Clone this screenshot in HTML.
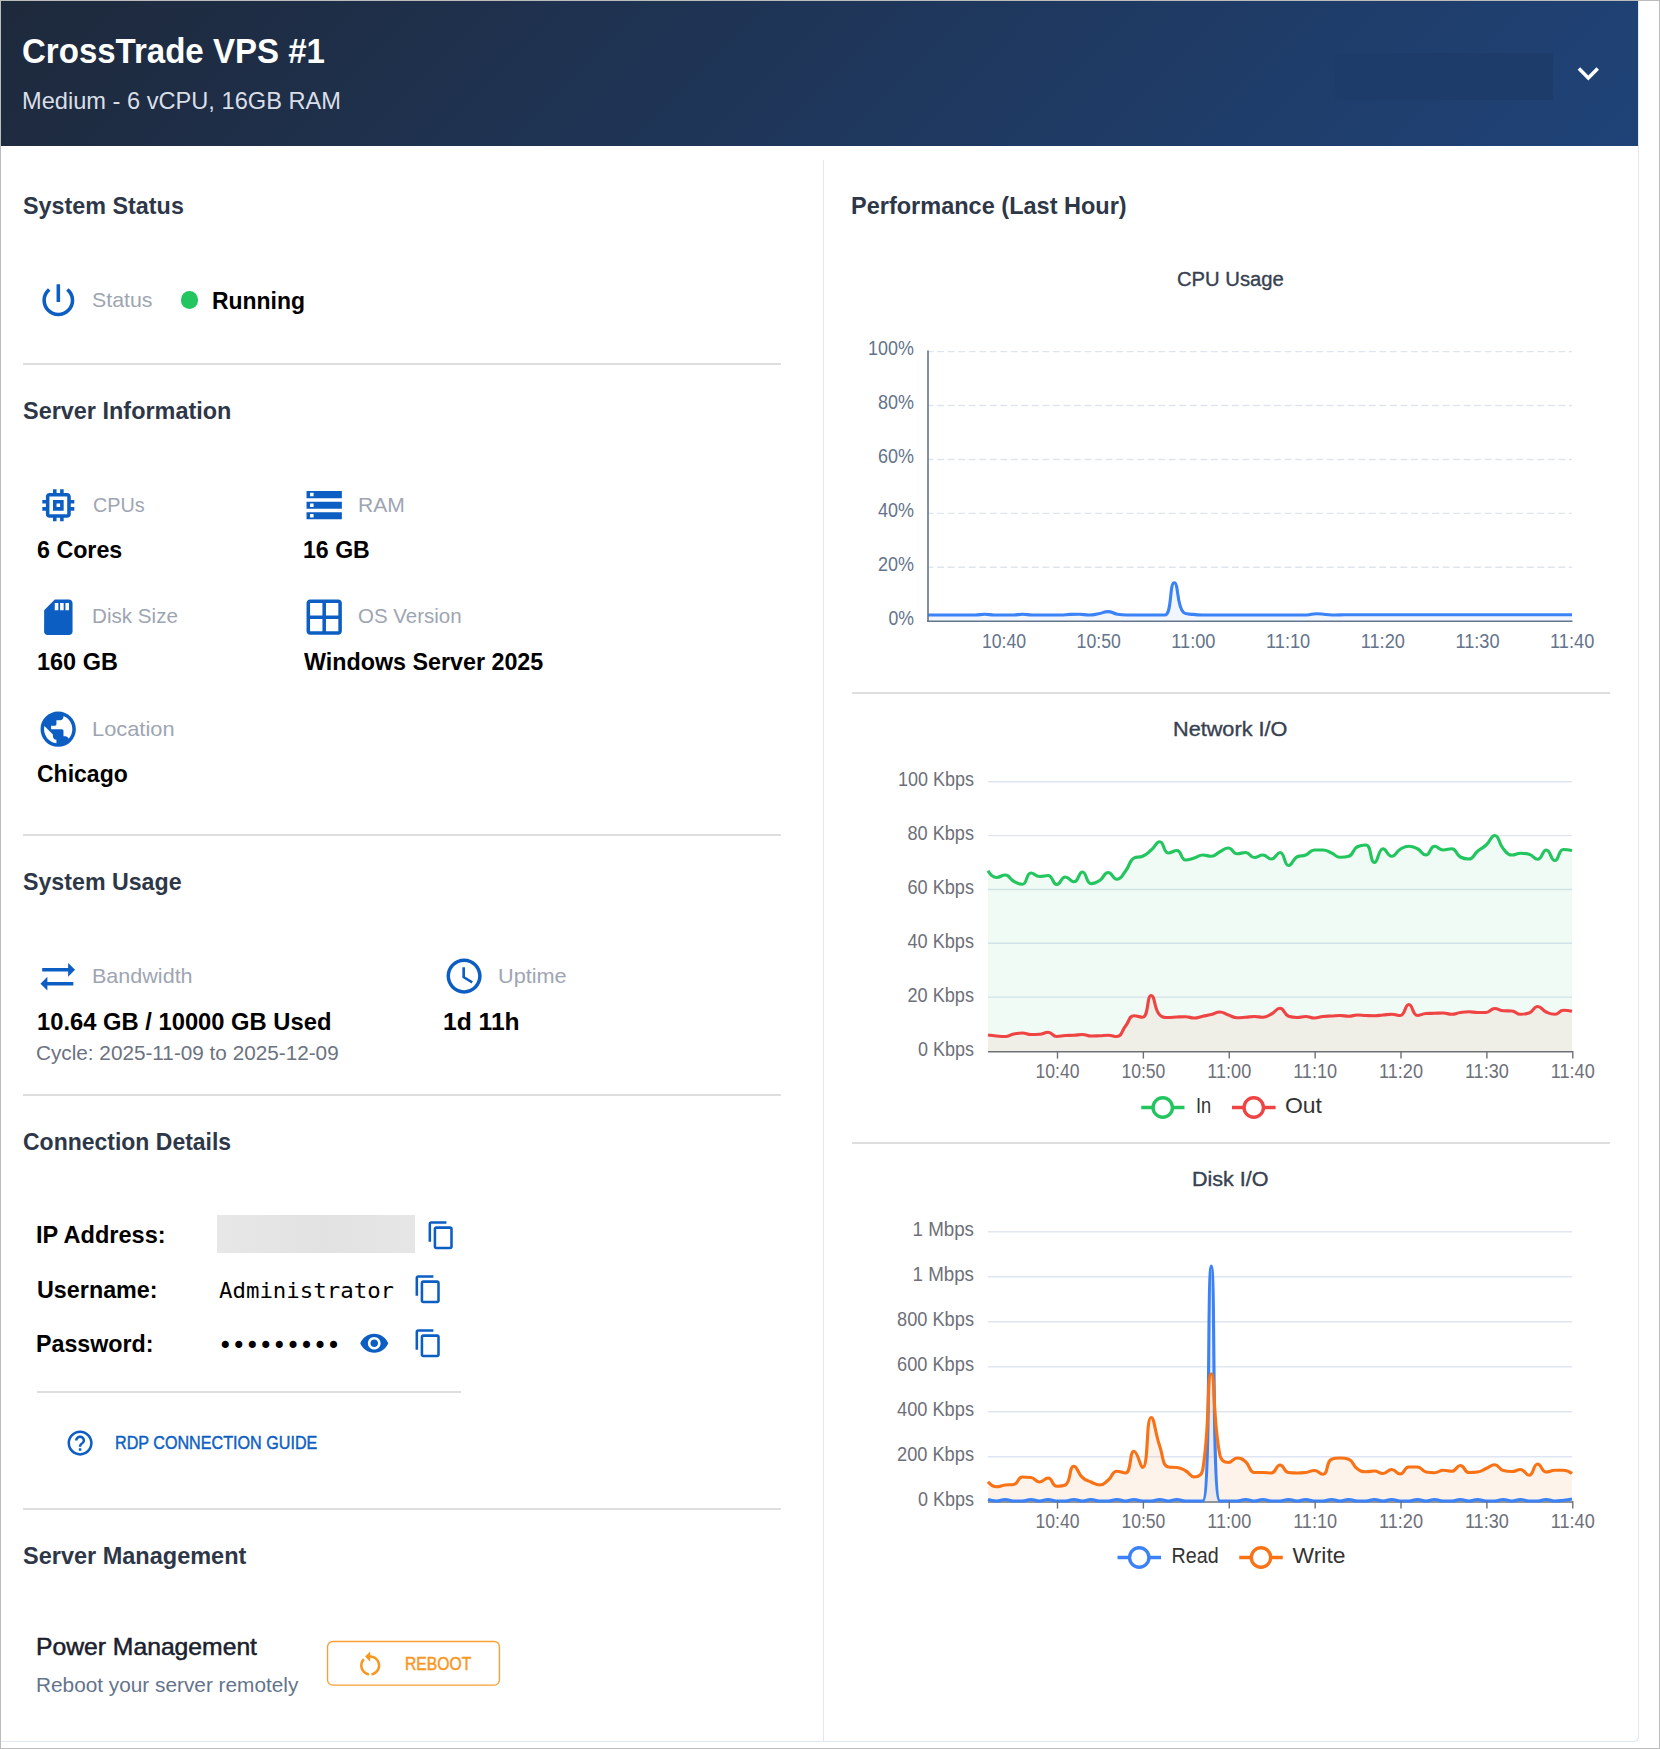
<!DOCTYPE html>
<html lang="en"><head><meta charset="utf-8"><title>CrossTrade VPS #1</title>
<style>
html,body{margin:0;padding:0;background:#fff}
body{width:1660px;height:1749px;position:relative;overflow:hidden;font-family:"Liberation Sans",sans-serif;color:#000}
.frame{position:absolute;left:0;top:0;width:1660px;height:1749px;box-sizing:border-box;border:1px solid #bcbcbc;pointer-events:none}
.card{position:absolute;left:1px;top:1px;width:1638px;height:1741px;box-sizing:border-box;border:1px solid #e2e8f0;border-top:0;border-left:0;border-radius:0 0 5.5px 0;background:#fff}
.inner{position:absolute;left:-1px;top:-1px;width:1660px;height:1749px}
.hdr{position:absolute;left:1px;top:1px;width:1637px;height:144.8px;background:linear-gradient(135deg,#1e293b 0%,#1f4378 100%)}
.redact{position:absolute;left:1335px;top:53px;width:218px;height:46.5px;background:#1e3c6a}
.t{position:absolute;white-space:nowrap;line-height:1;transform-origin:0 50%;display:block;margin:0;padding:0;font-weight:400}
.pb{display:inline-block;width:0;height:0;vertical-align:baseline}
.h1{font-weight:700;color:#fff}
.h2{color:#d9dee7}
.sec{font-weight:700;color:#2e3748}
.lbl{color:#9ea5b2}
.val{font-weight:700;color:#000}
.cyc{color:#6b7280}
.mono{font-family:"DejaVu Sans Mono","Liberation Mono",monospace;color:#000}
.dots{letter-spacing:-1.02px}
.link{color:#0f5fc3;-webkit-text-stroke:0.45px #0f5fc3}
.pm{color:#1a202c;-webkit-text-stroke:0.5px #1a202c}
.pd{color:#64748b}
.btn{color:#f9961e;-webkit-text-stroke:0.45px #f9961e}
.ct{color:#374151;-webkit-text-stroke:0.35px #374151}
.ic{position:absolute;display:block}
.chart{position:absolute;display:block;font-family:"Liberation Sans",sans-serif}
.hr{position:absolute;height:2px;background:#dedede}
.vr{position:absolute;left:823px;top:160px;width:1px;height:1581px;background:#e3e6ed}
.dot{position:absolute;left:181px;top:291.4px;width:17.2px;height:17.2px;border-radius:50%;background:#22c55e}
.ipbox{position:absolute;left:217px;top:1215px;width:198px;height:37.8px;background:linear-gradient(90deg,#e7e7e7,#e2e2e2 55%,#e6e6e6)}
.reboot{position:absolute;left:325px;top:1639px;display:block}
</style></head><body>
<div class="card"><div class="inner">
<header class="card-header"><div class="hdr"></div><div class="redact"></div>
<h1 class="t h1" id="h1" style="left:22.25px;top:34.10px;font-size:34.30px;transform:scaleX(0.9630)">CrossTrade VPS #1</h1>
<p class="t h2" id="h2" style="left:21.70px;top:89.91px;font-size:23.20px;transform:scaleX(1.0186)">Medium - 6 vCPU, 16GB RAM</p>
<svg class="ic" style="left:1567.41px;top:51.66px" width="42.67" height="42.67" viewBox="0 0 24 24"><path fill="#ffffff" d="M16.59 8.59 12 13.17 7.41 8.59 6 10l6 6 6-6z"/></svg>
</header>
<main class="card-body">
<div class="vr"></div>
<div class="col-left">
<section class="system-status"><h2 class="t sec" id="s1" style="left:22.60px;top:194.76px;font-size:23.40px;transform:scaleX(0.9979)">System Status</h2><svg class="ic" style="left:36.66px;top:278.77px" width="42.67" height="42.67" viewBox="0 0 24 24"><path fill="#0d5ec3" d="M13 3h-2v10h2zm4.83 2.17-1.42 1.42C17.99 7.86 19 9.81 19 12c0 3.87-3.13 7-7 7s-7-3.13-7-7c0-2.19 1.01-4.14 2.58-5.42L6.17 5.17C4.23 6.82 3 9.26 3 12c0 4.97 4.03 9 9 9s9-4.03 9-9c0-2.74-1.23-5.18-3.17-6.83"/></svg><span class="t lbl" id="l1" style="left:92.36px;top:290.00px;font-size:20.20px;transform:scaleX(1.0573)">Status</span><div class="dot"></div><span class="t val" id="v1" style="left:211.98px;top:289.76px;font-size:23.40px;transform:scaleX(0.9808)">Running</span><div class="hr" style="left:23.00px;top:363px;width:758.00px"></div></section>
<section class="server-info"><h2 class="t sec" id="s2" style="left:22.59px;top:399.76px;font-size:23.40px;transform:scaleX(1.0022)">Server Information</h2>
<div class="item"><svg class="ic" style="left:36.66px;top:483.56px" width="42.67" height="42.67" viewBox="0 0 24 24"><path fill="#0d5ec3" d="M15 9H9v6h6zm-2 4h-2v-2h2zm8-2V9h-2V7c0-1.1-.9-2-2-2h-2V3h-2v2h-2V3H9v2H7c-1.1 0-2 .9-2 2v2H3v2h2v2H3v2h2v2c0 1.1.9 2 2 2h2v2h2v-2h2v2h2v-2h2c1.1 0 2-.9 2-2v-2h2v-2h-2v-2zm-4 6H7V7h10z"/></svg><span class="t lbl" id="l2" style="left:92.73px;top:494.50px;font-size:20.20px;transform:scaleX(0.9807)">CPUs</span>
<span class="t val" id="v2" style="left:37.08px;top:539.01px;font-size:23.20px;transform:scaleX(1.0025)">6 Cores</span></div>
<div class="item"><svg class="ic" style="left:303.05px;top:483.80px" width="42.40" height="42.40" viewBox="0 0 24 24"><path fill="#0d5ec3" d="M2 20h20v-4H2zm2-3h2v2H4zM2 4v4h20V4zm4 3H4V5h2zm-4 7h20v-4H2zm2-3h2v2H4z"/></svg><span class="t lbl" id="l3" style="left:357.72px;top:494.50px;font-size:20.20px;transform:scaleX(1.0438)">RAM</span>
<span class="t val" id="v3" style="left:302.72px;top:539.01px;font-size:23.20px;transform:scaleX(0.9971)">16 GB</span></div>
<div class="item"><svg class="ic" style="left:36.77px;top:595.56px" width="42.67" height="42.67" viewBox="0 0 24 24"><path fill="#0d5ec3" d="M18 2h-8L4.02 8 4 20c0 1.1.9 2 2 2h12c1.1 0 2-.9 2-2V4c0-1.1-.9-2-2-2m-6 6h-2V4h2zm3 0h-2V4h2zm3 0h-2V4h2z"/></svg><span class="t lbl" id="l4" style="left:92.33px;top:606.25px;font-size:20.20px;transform:scaleX(1.0210)">Disk Size</span>
<span class="t val" id="v4" style="left:37.01px;top:651.01px;font-size:23.20px;transform:scaleX(1.0115)">160 GB</span></div>
<div class="item"><svg class="ic" style="left:303.05px;top:595.70px" width="42.40" height="42.40" viewBox="0 0 24 24"><path fill="#0d5ec3" d="M20 2H4c-1.1 0-2 .9-2 2v16c0 1.1.9 2 2 2h16c1.1 0 2-.9 2-2V4c0-1.1-.9-2-2-2m0 9h-7V4h7zm-9-7v7H4V4zm-7 9h7v7H4zm9 7v-7h7v7z"/></svg><span class="t lbl" id="l5" style="left:358.29px;top:606.25px;font-size:20.20px;transform:scaleX(1.0145)">OS Version</span>
<span class="t val" id="v5" style="left:303.84px;top:651.01px;font-size:23.20px;transform:scaleX(1.0044)">Windows Server 2025</span></div>
<div class="item"><svg class="ic" style="left:36.90px;top:707.55px" width="42.40" height="42.40" viewBox="0 0 24 24"><path fill="#0d5ec3" d="M12 2C6.48 2 2 6.48 2 12s4.48 10 10 10 10-4.48 10-10S17.52 2 12 2m-1 17.93c-3.95-.49-7-3.85-7-7.93 0-.62.08-1.21.21-1.79L9 15v1c0 1.1.9 2 2 2zm6.9-2.54c-.26-.81-1-1.39-1.9-1.39h-1v-3c0-.55-.45-1-1-1H8v-2h2c.55 0 1-.45 1-1V7h2c1.1 0 2-.9 2-2v-.41c2.93 1.19 5 4.06 5 7.41 0 2.08-.8 3.97-2.1 5.39"/></svg><span class="t lbl" id="l6" style="left:91.95px;top:718.50px;font-size:20.20px;transform:scaleX(1.0822)">Location</span>
<span class="t val" id="v6" style="left:36.81px;top:763.26px;font-size:23.20px;transform:scaleX(0.9920)">Chicago</span></div>
<div class="hr" style="left:23.00px;top:834px;width:758.00px"></div></section>
<section class="system-usage"><h2 class="t sec" id="s3" style="left:22.80px;top:870.51px;font-size:23.40px;transform:scaleX(0.9917)">System Usage</h2>
<div class="item"><svg class="ic" style="left:37.35px;top:955.50px" width="41.50" height="41.50" viewBox="0 0 24 24"><path fill="#0d5ec3" d="m18 12 4-4-4-4v3H3v2h15zM6 12l-4 4 4 4v-3h15v-2H6z"/></svg><span class="t lbl" id="l7" style="left:91.81px;top:965.75px;font-size:20.20px;transform:scaleX(1.0671)">Bandwidth</span>
<span class="t val" id="v7" style="left:37.21px;top:1010.51px;font-size:23.20px;transform:scaleX(1.0243)">10.64 GB / 10000 GB Used</span>
<p class="t cyc" id="c1" style="left:36.45px;top:1043.00px;font-size:20.00px;transform:scaleX(1.0364)">Cycle: 2025-11-09 to 2025-12-09</p></div>
<div class="item"><svg class="ic" style="left:442.90px;top:954.50px" width="42.20" height="42.20" viewBox="0 0 24 24"><path fill="#0d5ec3" d="M11.99 2C6.47 2 2 6.48 2 12s4.47 10 9.99 10C17.52 22 22 17.52 22 12S17.52 2 11.99 2M12 20c-4.42 0-8-3.58-8-8s3.58-8 8-8 8 3.58 8 8-3.58 8-8 8m.5-13H11v6l5.25 3.15.75-1.23-4.5-2.67z"/></svg><span class="t lbl" id="l8" style="left:497.77px;top:965.75px;font-size:20.20px;transform:scaleX(1.0728)">Uptime</span>
<span class="t val" id="v8" style="left:442.79px;top:1010.51px;font-size:23.20px;transform:scaleX(1.0616)">1d 11h</span></div>
<div class="hr" style="left:23.00px;top:1094px;width:758.00px"></div></section>
<section class="connection"><h2 class="t sec" id="s4" style="left:22.96px;top:1131.01px;font-size:23.40px;transform:scaleX(0.9826)">Connection Details</h2>
<div class="row"><span class="t val" id="k1" style="left:35.52px;top:1224.26px;font-size:23.20px;transform:scaleX(1.0159)">IP Address:</span><div class="ipbox"></div><svg class="ic" style="left:426.20px;top:1219.70px" width="30.60" height="30.60" viewBox="0 0 24 24"><path fill="#0d5ec3" d="M16 1H4c-1.1 0-2 .9-2 2v14h2V3h12zm3 4H8c-1.1 0-2 .9-2 2v14c0 1.1.9 2 2 2h11c1.1 0 2-.9 2-2V7c0-1.1-.9-2-2-2m0 16H8V7h11z"/></svg></div>
<div class="row"><span class="t val" id="k2" style="left:36.78px;top:1278.51px;font-size:23.20px;transform:scaleX(1.0063)">Username:</span>
<span class="t mono" id="m1" style="left:219.14px;top:1279.51px;font-size:21.30px;transform:scaleX(1.0504)">Administrator</span><svg class="ic" style="left:412.80px;top:1274.10px" width="30.60" height="30.60" viewBox="0 0 24 24"><path fill="#0d5ec3" d="M16 1H4c-1.1 0-2 .9-2 2v14h2V3h12zm3 4H8c-1.1 0-2 .9-2 2v14c0 1.1.9 2 2 2h11c1.1 0 2-.9 2-2V7c0-1.1-.9-2-2-2m0 16H8V7h11z"/></svg></div>
<div class="row"><span class="t val" id="k3" style="left:35.93px;top:1332.76px;font-size:23.20px;transform:scaleX(1.0025)">Password:</span>
<span class="t mono dots" id="m2" style="left:217.99px;top:1334.10px;font-size:24.00px;transform:scaleX(1.0072)">•••••••••</span><svg class="ic" style="left:358.75px;top:1327.75px" width="30.50" height="30.50" viewBox="0 0 24 24"><path fill="#0d5ec3" d="M12 4.5C7 4.5 2.73 7.61 1 12c1.73 4.39 6 7.5 11 7.5s9.27-3.11 11-7.5c-1.73-4.39-6-7.5-11-7.5M12 17c-2.76 0-5-2.24-5-5s2.24-5 5-5 5 2.24 5 5-2.24 5-5 5m0-8c-1.66 0-3 1.34-3 3s1.34 3 3 3 3-1.34 3-3-1.34-3-3-3"/></svg><svg class="ic" style="left:412.80px;top:1328.20px" width="30.60" height="30.60" viewBox="0 0 24 24"><path fill="#0d5ec3" d="M16 1H4c-1.1 0-2 .9-2 2v14h2V3h12zm3 4H8c-1.1 0-2 .9-2 2v14c0 1.1.9 2 2 2h11c1.1 0 2-.9 2-2V7c0-1.1-.9-2-2-2m0 16H8V7h11z"/></svg></div>
<div class="hr" style="left:37.00px;top:1391px;width:424.00px"></div>
<div class="row"><svg class="ic" style="left:65.15px;top:1428.00px" width="30.20" height="30.20" viewBox="0 0 24 24"><path fill="#0d5ec3" d="M11 18h2v-2h-2zm1-16C6.48 2 2 6.48 2 12s4.48 10 10 10 10-4.48 10-10S17.52 2 12 2m0 18c-4.41 0-8-3.59-8-8s3.59-8 8-8 8 3.59 8 8-3.59 8-8 8m0-14c-2.21 0-4 1.79-4 4h2c0-1.1.9-2 2-2s2 .9 2 2c0 2-3 1.75-3 5h2c0-2.25 3-2.5 3-5 0-2.21-1.79-4-4-4"/></svg><span class="t link" id="r1" style="left:115.18px;top:1434.26px;font-size:18.20px;transform:scaleX(0.8872)">RDP CONNECTION GUIDE</span></div>
<div class="hr" style="left:23.00px;top:1508px;width:758.00px"></div></section>
<section class="management"><h2 class="t sec" id="s5" style="left:22.59px;top:1544.76px;font-size:23.40px;transform:scaleX(1.0047)">Server Management</h2>
<span class="t pm" id="p1" style="left:35.51px;top:1636.01px;font-size:23.60px;transform:scaleX(1.0466)">Power Management</span>
<p class="t pd" id="p2" style="left:36.48px;top:1675.00px;font-size:20.20px;transform:scaleX(1.0299)">Reboot your server remotely</p>
<div class="button"><svg class="reboot" width="178" height="49" viewBox="325 1639 178 49"><rect x="327.55" y="1641.45" width="171.9" height="43.7" rx="5.2" fill="none" stroke="#f99f33" stroke-width="1.35"/></svg><svg class="ic" style="left:354.50px;top:1649.10px" width="30.40" height="30.40" viewBox="0 0 24 24"><path fill="#f9961e" d="M12 5V2L8 6l4 4V7c3.31 0 6 2.69 6 6 0 2.97-2.17 5.43-5 5.91v2.02c3.95-.49 7-3.85 7-7.93 0-4.42-3.58-8-8-8m-6 8c0-1.65.67-3.15 1.76-4.24L6.34 7.34C4.9 8.79 4 10.79 4 13c0 4.08 3.05 7.44 7 7.93v-2.02c-2.83-.48-5-2.94-5-5.91"/></svg><span class="t btn" id="b1" style="left:405.05px;top:1655.80px;font-size:17.60px;transform:scaleX(0.8919)">REBOOT</span></div></section>
</div>
<div class="col-right"><section class="performance"><h2 class="t sec" id="s6" style="left:851.16px;top:194.76px;font-size:23.40px;transform:scaleX(1.0053)">Performance (Last Hour)</h2>
<div class="chart-box"><h3 class="t ct" id="t1" style="left:1177.14px;top:269.51px;font-size:19.60px;transform:scaleX(1.0328)">CPU Usage</h3><svg class="chart" style="left:852px;top:330px" width="758" height="340" viewBox="852 330 758 340">
<line x1="928" x2="1572" y1="351.60" y2="351.60" stroke="#dfe5ef" stroke-width="1.4" stroke-dasharray="6.9 3.63" stroke-dashoffset="1.4"/>
<line x1="928" x2="1572" y1="405.50" y2="405.50" stroke="#dfe5ef" stroke-width="1.4" stroke-dasharray="6.9 3.63" stroke-dashoffset="1.4"/>
<line x1="928" x2="1572" y1="459.50" y2="459.50" stroke="#dfe5ef" stroke-width="1.4" stroke-dasharray="6.9 3.63" stroke-dashoffset="1.4"/>
<line x1="928" x2="1572" y1="513.40" y2="513.40" stroke="#dfe5ef" stroke-width="1.4" stroke-dasharray="6.9 3.63" stroke-dashoffset="1.4"/>
<line x1="928" x2="1572" y1="567.30" y2="567.30" stroke="#dfe5ef" stroke-width="1.4" stroke-dasharray="6.9 3.63" stroke-dashoffset="1.4"/>
<path d="M928.00 615.00C928.00 615.00 932.74 615.00 937.47 615.00C942.21 615.00 942.21 615.00 946.94 615.00C951.68 615.00 951.68 615.00 956.41 615.00C961.15 615.00 961.15 615.00 965.88 615.00C970.62 615.00 970.63 615.00 975.35 615.00C980.10 615.00 980.09 614.20 984.82 614.20C989.56 614.20 989.55 615.00 994.29 615.00C999.02 615.00 999.03 615.00 1003.76 615.00C1008.50 615.00 1008.51 615.00 1013.24 615.00C1017.98 615.00 1017.97 614.30 1022.71 614.30C1027.44 614.30 1027.43 615.00 1032.18 615.00C1036.91 615.00 1036.91 615.00 1041.65 615.00C1046.38 615.00 1046.38 615.00 1051.12 615.00C1055.85 615.00 1055.86 615.00 1060.59 615.00C1065.33 615.00 1065.32 614.60 1070.06 614.40C1074.79 614.20 1074.80 614.20 1079.53 614.20C1084.27 614.20 1084.28 615.00 1089.00 615.00C1093.75 615.00 1093.78 614.64 1098.47 613.80C1103.25 612.94 1103.23 611.60 1107.94 611.60C1112.70 611.60 1112.60 613.37 1117.41 614.20C1122.07 615.00 1122.14 615.00 1126.88 615.00C1131.61 615.00 1131.62 615.00 1136.35 615.00C1141.09 615.00 1141.09 615.00 1145.82 615.00C1150.56 615.00 1150.56 615.00 1155.29 615.00C1160.03 615.00 1162.68 615.00 1164.76 615.00C1172.15 615.00 1169.33 582.80 1174.24 582.80C1178.80 582.80 1176.47 606.76 1183.71 612.60C1185.94 614.40 1188.40 613.80 1193.18 614.40C1197.87 615.00 1197.91 615.00 1202.65 615.00C1207.38 615.00 1207.38 615.00 1212.12 615.00C1216.85 615.00 1216.85 615.00 1221.59 615.00C1226.32 615.00 1226.32 615.00 1231.06 615.00C1235.79 615.00 1235.79 615.00 1240.53 615.00C1245.26 615.00 1245.26 615.00 1250.00 615.00C1254.74 615.00 1254.74 615.00 1259.47 615.00C1264.21 615.00 1264.21 615.00 1268.94 615.00C1273.68 615.00 1273.68 615.00 1278.41 615.00C1283.15 615.00 1283.15 615.00 1287.88 615.00C1292.62 615.00 1292.62 615.00 1297.35 615.00C1302.09 615.00 1302.11 615.00 1306.82 615.00C1311.58 615.00 1311.55 613.70 1316.29 613.70C1321.02 613.70 1321.02 614.17 1325.76 614.50C1330.49 614.82 1330.50 615.00 1335.24 615.00C1339.97 615.00 1339.97 614.70 1344.71 614.70C1349.44 614.70 1349.44 614.70 1354.18 614.70C1358.91 614.70 1358.91 614.70 1363.65 614.70C1368.38 614.70 1368.38 614.70 1373.12 614.70C1377.85 614.70 1377.85 614.70 1382.59 614.70C1387.32 614.70 1387.32 614.70 1392.06 614.70C1396.79 614.70 1396.79 614.70 1401.53 614.70C1406.26 614.70 1406.26 614.70 1411.00 614.70C1415.74 614.70 1415.74 614.70 1420.47 614.70C1425.21 614.70 1425.21 614.70 1429.94 614.70C1434.68 614.70 1434.68 614.70 1439.41 614.70C1444.15 614.70 1444.15 614.70 1448.88 614.70C1453.62 614.70 1453.62 614.70 1458.35 614.70C1463.09 614.70 1463.09 614.70 1467.82 614.70C1472.56 614.70 1472.56 614.70 1477.29 614.70C1482.03 614.70 1482.03 614.70 1486.76 614.70C1491.50 614.70 1491.50 614.70 1496.24 614.70C1500.97 614.70 1500.97 614.70 1505.71 614.70C1510.44 614.70 1510.44 614.70 1515.18 614.70C1519.91 614.70 1519.91 614.70 1524.65 614.70C1529.38 614.70 1529.38 614.70 1534.12 614.70C1538.85 614.70 1538.85 614.70 1543.59 614.70C1548.32 614.70 1548.32 614.70 1553.06 614.70C1557.79 614.70 1557.79 614.70 1562.53 614.70C1567.26 614.70 1572.00 614.70 1572.00 614.70L1572 621.2L928 621.2Z" fill="#3b82f6" fill-opacity="0.07"/>
<path d="M928.00 615.00C928.00 615.00 932.74 615.00 937.47 615.00C942.21 615.00 942.21 615.00 946.94 615.00C951.68 615.00 951.68 615.00 956.41 615.00C961.15 615.00 961.15 615.00 965.88 615.00C970.62 615.00 970.63 615.00 975.35 615.00C980.10 615.00 980.09 614.20 984.82 614.20C989.56 614.20 989.55 615.00 994.29 615.00C999.02 615.00 999.03 615.00 1003.76 615.00C1008.50 615.00 1008.51 615.00 1013.24 615.00C1017.98 615.00 1017.97 614.30 1022.71 614.30C1027.44 614.30 1027.43 615.00 1032.18 615.00C1036.91 615.00 1036.91 615.00 1041.65 615.00C1046.38 615.00 1046.38 615.00 1051.12 615.00C1055.85 615.00 1055.86 615.00 1060.59 615.00C1065.33 615.00 1065.32 614.60 1070.06 614.40C1074.79 614.20 1074.80 614.20 1079.53 614.20C1084.27 614.20 1084.28 615.00 1089.00 615.00C1093.75 615.00 1093.78 614.64 1098.47 613.80C1103.25 612.94 1103.23 611.60 1107.94 611.60C1112.70 611.60 1112.60 613.37 1117.41 614.20C1122.07 615.00 1122.14 615.00 1126.88 615.00C1131.61 615.00 1131.62 615.00 1136.35 615.00C1141.09 615.00 1141.09 615.00 1145.82 615.00C1150.56 615.00 1150.56 615.00 1155.29 615.00C1160.03 615.00 1162.68 615.00 1164.76 615.00C1172.15 615.00 1169.33 582.80 1174.24 582.80C1178.80 582.80 1176.47 606.76 1183.71 612.60C1185.94 614.40 1188.40 613.80 1193.18 614.40C1197.87 615.00 1197.91 615.00 1202.65 615.00C1207.38 615.00 1207.38 615.00 1212.12 615.00C1216.85 615.00 1216.85 615.00 1221.59 615.00C1226.32 615.00 1226.32 615.00 1231.06 615.00C1235.79 615.00 1235.79 615.00 1240.53 615.00C1245.26 615.00 1245.26 615.00 1250.00 615.00C1254.74 615.00 1254.74 615.00 1259.47 615.00C1264.21 615.00 1264.21 615.00 1268.94 615.00C1273.68 615.00 1273.68 615.00 1278.41 615.00C1283.15 615.00 1283.15 615.00 1287.88 615.00C1292.62 615.00 1292.62 615.00 1297.35 615.00C1302.09 615.00 1302.11 615.00 1306.82 615.00C1311.58 615.00 1311.55 613.70 1316.29 613.70C1321.02 613.70 1321.02 614.17 1325.76 614.50C1330.49 614.82 1330.50 615.00 1335.24 615.00C1339.97 615.00 1339.97 614.70 1344.71 614.70C1349.44 614.70 1349.44 614.70 1354.18 614.70C1358.91 614.70 1358.91 614.70 1363.65 614.70C1368.38 614.70 1368.38 614.70 1373.12 614.70C1377.85 614.70 1377.85 614.70 1382.59 614.70C1387.32 614.70 1387.32 614.70 1392.06 614.70C1396.79 614.70 1396.79 614.70 1401.53 614.70C1406.26 614.70 1406.26 614.70 1411.00 614.70C1415.74 614.70 1415.74 614.70 1420.47 614.70C1425.21 614.70 1425.21 614.70 1429.94 614.70C1434.68 614.70 1434.68 614.70 1439.41 614.70C1444.15 614.70 1444.15 614.70 1448.88 614.70C1453.62 614.70 1453.62 614.70 1458.35 614.70C1463.09 614.70 1463.09 614.70 1467.82 614.70C1472.56 614.70 1472.56 614.70 1477.29 614.70C1482.03 614.70 1482.03 614.70 1486.76 614.70C1491.50 614.70 1491.50 614.70 1496.24 614.70C1500.97 614.70 1500.97 614.70 1505.71 614.70C1510.44 614.70 1510.44 614.70 1515.18 614.70C1519.91 614.70 1519.91 614.70 1524.65 614.70C1529.38 614.70 1529.38 614.70 1534.12 614.70C1538.85 614.70 1538.85 614.70 1543.59 614.70C1548.32 614.70 1548.32 614.70 1553.06 614.70C1557.79 614.70 1557.79 614.70 1562.53 614.70C1567.26 614.70 1572.00 614.70 1572.00 614.70" fill="none" stroke="#3b82f6" stroke-width="3.1" stroke-linejoin="round"/>
<line x1="928" x2="928" y1="350.5" y2="622" stroke="#64748b" stroke-width="1.6"/>
<line x1="927.2" x2="1572.5" y1="621.3" y2="621.3" stroke="#64748b" stroke-width="1.6"/>
<text x="913.90" y="355.20" text-anchor="end" fill="#64748b" font-size="19.5" textLength="45.8" lengthAdjust="spacingAndGlyphs">100%</text>
<text x="913.90" y="409.10" text-anchor="end" fill="#64748b" font-size="19.5" textLength="36.0" lengthAdjust="spacingAndGlyphs">80%</text>
<text x="913.90" y="463.10" text-anchor="end" fill="#64748b" font-size="19.5" textLength="36.0" lengthAdjust="spacingAndGlyphs">60%</text>
<text x="913.90" y="517.00" text-anchor="end" fill="#64748b" font-size="19.5" textLength="36.0" lengthAdjust="spacingAndGlyphs">40%</text>
<text x="913.90" y="570.90" text-anchor="end" fill="#64748b" font-size="19.5" textLength="36.0" lengthAdjust="spacingAndGlyphs">20%</text>
<text x="913.90" y="624.80" text-anchor="end" fill="#64748b" font-size="19.5" textLength="25.5" lengthAdjust="spacingAndGlyphs">0%</text>
<text x="1004.00" y="647.50" text-anchor="middle" fill="#64748b" font-size="19.5" textLength="44.2" lengthAdjust="spacingAndGlyphs">10:40</text>
<text x="1098.70" y="647.50" text-anchor="middle" fill="#64748b" font-size="19.5" textLength="44.2" lengthAdjust="spacingAndGlyphs">10:50</text>
<text x="1193.40" y="647.50" text-anchor="middle" fill="#64748b" font-size="19.5" textLength="44.2" lengthAdjust="spacingAndGlyphs">11:00</text>
<text x="1288.10" y="647.50" text-anchor="middle" fill="#64748b" font-size="19.5" textLength="44.2" lengthAdjust="spacingAndGlyphs">11:10</text>
<text x="1382.80" y="647.50" text-anchor="middle" fill="#64748b" font-size="19.5" textLength="44.2" lengthAdjust="spacingAndGlyphs">11:20</text>
<text x="1477.50" y="647.50" text-anchor="middle" fill="#64748b" font-size="19.5" textLength="44.2" lengthAdjust="spacingAndGlyphs">11:30</text>
<text x="1572.20" y="647.50" text-anchor="middle" fill="#64748b" font-size="19.5" textLength="44.2" lengthAdjust="spacingAndGlyphs">11:40</text>
</svg></div><div class="hr" style="left:852.00px;top:692px;width:758.00px"></div>
<div class="chart-box"><h3 class="t ct" id="t2" style="left:1173.03px;top:719.51px;font-size:19.60px;transform:scaleX(1.1060)">Network I/O</h3><svg class="chart" style="left:852px;top:760px" width="758" height="360" viewBox="852 760 758 360">
<line x1="988" x2="1572" y1="781.75" y2="781.75" stroke="#e0e6f1" stroke-width="1.4"/>
<line x1="988" x2="1572" y1="835.60" y2="835.60" stroke="#e0e6f1" stroke-width="1.4"/>
<line x1="988" x2="1572" y1="889.45" y2="889.45" stroke="#e0e6f1" stroke-width="1.4"/>
<line x1="988" x2="1572" y1="943.30" y2="943.30" stroke="#e0e6f1" stroke-width="1.4"/>
<line x1="988" x2="1572" y1="997.15" y2="997.15" stroke="#e0e6f1" stroke-width="1.4"/>
<line x1="988" x2="1572.7" y1="1051.70" y2="1051.70" stroke="#6e7079" stroke-width="1.5"/>
<path d="M988.00 870.75C988.00 870.75 991.87 877.50 996.59 877.50C1000.45 877.50 1001.25 875.00 1005.18 875.00C1009.84 875.00 1009.14 878.76 1013.76 881.25C1017.73 883.38 1018.99 884.25 1022.35 884.25C1027.58 884.25 1025.75 873.00 1030.94 873.00C1034.34 873.00 1035.08 876.50 1039.53 876.50C1043.67 876.50 1044.60 875.50 1048.12 875.50C1053.18 875.50 1052.22 884.50 1056.71 884.50C1060.81 884.50 1060.68 877.00 1065.29 877.00C1069.27 877.00 1070.19 881.75 1073.88 881.75C1078.77 881.75 1078.42 872.00 1082.47 872.00C1087.01 872.00 1085.79 883.75 1091.06 883.75C1094.38 883.75 1095.88 882.97 1099.65 880.50C1104.47 877.34 1103.79 872.50 1108.24 872.50C1112.38 872.50 1112.68 879.25 1116.82 879.25C1121.27 879.25 1121.75 875.78 1125.41 871.25C1130.34 865.16 1128.48 861.15 1134.00 858.00C1137.07 856.25 1138.71 858.00 1142.59 856.25C1147.29 854.13 1147.13 853.42 1151.18 850.00C1155.72 846.17 1155.84 841.75 1159.76 841.75C1164.43 841.75 1163.09 853.00 1168.35 853.00C1171.68 853.00 1173.41 850.50 1176.94 850.50C1182.00 850.50 1180.44 860.00 1185.53 860.00C1189.03 860.00 1189.89 859.23 1194.12 858.00C1198.48 856.73 1198.31 855.00 1202.71 855.00C1206.90 855.00 1207.24 856.25 1211.29 856.25C1215.83 856.25 1215.52 853.85 1219.88 851.75C1224.10 849.72 1224.39 848.00 1228.47 848.00C1232.97 848.00 1232.39 853.75 1237.06 853.75C1240.98 853.75 1241.64 852.50 1245.65 852.50C1250.23 852.50 1249.72 857.50 1254.24 857.50C1258.30 857.50 1258.65 855.00 1262.82 855.00C1267.24 855.00 1267.39 859.00 1271.41 859.00C1275.98 859.00 1276.49 852.50 1280.00 852.50C1285.08 852.50 1283.78 865.50 1288.59 865.50C1292.37 865.50 1292.17 859.20 1297.18 856.75C1300.76 855.00 1301.74 856.58 1305.76 855.00C1310.33 853.21 1309.75 850.00 1314.35 850.00C1318.33 850.00 1318.77 850.00 1322.94 850.00C1327.36 850.00 1327.35 851.23 1331.53 853.00C1335.94 854.86 1335.60 857.25 1340.12 857.25C1344.19 857.25 1345.24 857.25 1348.71 856.25C1353.83 854.77 1352.20 849.31 1357.29 846.75C1360.78 845.00 1363.22 845.00 1365.88 845.00C1371.81 845.00 1369.78 862.50 1374.47 862.50C1378.37 862.50 1378.02 848.75 1383.06 848.75C1386.61 848.75 1387.29 856.25 1391.65 856.25C1395.88 856.25 1395.52 852.00 1400.24 849.25C1404.11 847.00 1404.49 846.25 1408.82 846.25C1413.08 846.25 1413.49 846.75 1417.41 848.75C1422.07 851.12 1422.01 855.00 1426.00 855.00C1430.60 855.00 1429.72 846.25 1434.59 846.25C1438.31 846.25 1438.72 850.00 1443.18 850.00C1447.31 850.00 1448.14 848.75 1451.76 848.75C1456.73 848.75 1455.42 854.30 1460.35 857.00C1464.01 859.00 1465.23 859.00 1468.94 859.00C1473.81 859.00 1473.05 854.90 1477.53 851.25C1481.64 847.90 1482.22 848.57 1486.12 845.00C1490.81 840.70 1490.86 835.50 1494.71 835.50C1499.45 835.50 1498.16 842.92 1503.29 848.75C1506.75 852.67 1507.18 855.00 1511.88 855.00C1515.77 855.00 1516.15 853.25 1520.47 853.25C1524.74 853.25 1525.06 853.25 1529.06 854.25C1533.65 855.40 1533.86 859.25 1537.65 859.25C1542.45 859.25 1542.10 850.00 1546.24 850.00C1550.68 850.00 1550.59 860.50 1554.82 860.50C1559.18 860.50 1558.11 849.50 1563.41 849.50C1566.70 849.50 1572.00 850.50 1572.00 850.50L1572 1051.40L988 1051.40Z" fill="#22c55e" fill-opacity="0.070"/>
<path d="M988.00 1035.00C988.00 1035.00 992.28 1035.62 996.59 1036.00C1000.87 1036.37 1000.97 1036.50 1005.18 1036.50C1009.55 1036.50 1009.40 1034.89 1013.76 1034.00C1017.99 1033.14 1018.08 1033.00 1022.35 1033.00C1026.66 1033.00 1026.62 1034.50 1030.94 1034.50C1035.20 1034.50 1035.29 1034.50 1039.53 1034.25C1043.88 1033.99 1044.00 1032.25 1048.12 1032.25C1052.59 1032.25 1052.19 1036.50 1056.71 1036.50C1060.78 1036.50 1060.99 1035.75 1065.29 1035.50C1069.57 1035.25 1069.60 1035.50 1073.88 1035.25C1078.18 1035.00 1078.20 1034.50 1082.47 1034.50C1086.79 1034.50 1086.73 1036.00 1091.06 1036.00C1095.32 1036.00 1095.36 1035.94 1099.65 1035.75C1103.94 1035.56 1103.96 1035.25 1108.24 1035.25C1112.55 1035.25 1113.44 1036.50 1116.82 1036.50C1122.03 1036.50 1121.15 1031.40 1125.41 1026.25C1129.74 1021.03 1128.77 1015.75 1134.00 1015.75C1137.36 1015.75 1140.26 1017.25 1142.59 1017.25C1148.84 1017.25 1146.68 995.50 1151.18 995.50C1155.27 995.50 1153.72 1009.04 1159.76 1015.00C1162.30 1017.50 1163.98 1017.50 1168.35 1017.50C1172.56 1017.50 1172.64 1017.19 1176.94 1017.00C1181.23 1016.81 1181.26 1016.75 1185.53 1016.75C1189.85 1016.75 1189.84 1018.00 1194.12 1018.00C1198.43 1018.00 1198.41 1017.12 1202.71 1016.25C1207.00 1015.38 1207.04 1015.55 1211.29 1014.50C1215.63 1013.43 1215.62 1012.00 1219.88 1012.00C1224.21 1012.00 1224.16 1013.56 1228.47 1015.00C1232.75 1016.43 1232.66 1017.75 1237.06 1017.75C1241.25 1017.75 1241.36 1017.56 1245.65 1017.25C1249.95 1016.94 1249.94 1016.50 1254.24 1016.50C1258.53 1016.50 1258.66 1017.25 1262.82 1017.25C1267.25 1017.25 1267.37 1016.12 1271.41 1014.00C1275.96 1011.62 1275.98 1008.25 1280.00 1008.25C1284.57 1008.25 1283.65 1014.56 1288.59 1016.25C1292.24 1017.50 1292.87 1017.50 1297.18 1017.50C1301.46 1017.50 1301.49 1016.50 1305.76 1016.50C1310.08 1016.50 1310.06 1018.00 1314.35 1018.00C1318.65 1018.00 1318.62 1017.00 1322.94 1016.50C1327.21 1016.00 1327.24 1016.25 1331.53 1016.00C1335.82 1015.75 1335.83 1015.50 1340.12 1015.50C1344.42 1015.50 1344.43 1016.25 1348.71 1016.25C1353.01 1016.25 1352.98 1015.00 1357.29 1015.00C1361.57 1015.00 1361.59 1015.31 1365.88 1015.50C1370.17 1015.69 1370.18 1015.75 1374.47 1015.75C1378.77 1015.75 1378.76 1015.38 1383.06 1015.00C1387.35 1014.62 1387.37 1014.25 1391.65 1014.25C1395.96 1014.25 1396.94 1015.50 1400.24 1015.50C1405.53 1015.50 1404.53 1004.50 1408.82 1004.50C1413.12 1004.50 1412.15 1015.50 1417.41 1015.50C1420.74 1015.50 1421.65 1013.76 1426.00 1013.50C1430.24 1013.25 1430.29 1013.38 1434.59 1013.25C1438.88 1013.12 1438.90 1013.00 1443.18 1013.00C1447.49 1013.00 1447.49 1014.25 1451.76 1014.25C1456.08 1014.25 1456.02 1013.13 1460.35 1012.50C1464.61 1011.88 1464.65 1011.75 1468.94 1011.75C1473.24 1011.75 1473.23 1012.50 1477.53 1012.50C1481.82 1012.50 1482.03 1012.50 1486.12 1012.50C1490.62 1012.50 1490.27 1008.50 1494.71 1008.50C1498.86 1008.50 1498.93 1010.49 1503.29 1010.75C1507.52 1011.00 1507.73 1010.75 1511.88 1011.00C1516.32 1011.27 1516.06 1014.25 1520.47 1014.25C1524.64 1014.25 1525.23 1014.25 1529.06 1013.00C1533.81 1011.45 1533.24 1006.50 1537.65 1006.50C1541.82 1006.50 1541.64 1009.93 1546.24 1012.00C1550.23 1013.80 1550.67 1014.25 1554.82 1014.25C1559.26 1014.25 1558.92 1010.25 1563.41 1010.25C1567.51 1010.25 1572.00 1011.25 1572.00 1011.25L1572 1051.40L988 1051.40Z" fill="#ef4444" fill-opacity="0.065"/>
<path d="M988.00 870.75C988.00 870.75 991.87 877.50 996.59 877.50C1000.45 877.50 1001.25 875.00 1005.18 875.00C1009.84 875.00 1009.14 878.76 1013.76 881.25C1017.73 883.38 1018.99 884.25 1022.35 884.25C1027.58 884.25 1025.75 873.00 1030.94 873.00C1034.34 873.00 1035.08 876.50 1039.53 876.50C1043.67 876.50 1044.60 875.50 1048.12 875.50C1053.18 875.50 1052.22 884.50 1056.71 884.50C1060.81 884.50 1060.68 877.00 1065.29 877.00C1069.27 877.00 1070.19 881.75 1073.88 881.75C1078.77 881.75 1078.42 872.00 1082.47 872.00C1087.01 872.00 1085.79 883.75 1091.06 883.75C1094.38 883.75 1095.88 882.97 1099.65 880.50C1104.47 877.34 1103.79 872.50 1108.24 872.50C1112.38 872.50 1112.68 879.25 1116.82 879.25C1121.27 879.25 1121.75 875.78 1125.41 871.25C1130.34 865.16 1128.48 861.15 1134.00 858.00C1137.07 856.25 1138.71 858.00 1142.59 856.25C1147.29 854.13 1147.13 853.42 1151.18 850.00C1155.72 846.17 1155.84 841.75 1159.76 841.75C1164.43 841.75 1163.09 853.00 1168.35 853.00C1171.68 853.00 1173.41 850.50 1176.94 850.50C1182.00 850.50 1180.44 860.00 1185.53 860.00C1189.03 860.00 1189.89 859.23 1194.12 858.00C1198.48 856.73 1198.31 855.00 1202.71 855.00C1206.90 855.00 1207.24 856.25 1211.29 856.25C1215.83 856.25 1215.52 853.85 1219.88 851.75C1224.10 849.72 1224.39 848.00 1228.47 848.00C1232.97 848.00 1232.39 853.75 1237.06 853.75C1240.98 853.75 1241.64 852.50 1245.65 852.50C1250.23 852.50 1249.72 857.50 1254.24 857.50C1258.30 857.50 1258.65 855.00 1262.82 855.00C1267.24 855.00 1267.39 859.00 1271.41 859.00C1275.98 859.00 1276.49 852.50 1280.00 852.50C1285.08 852.50 1283.78 865.50 1288.59 865.50C1292.37 865.50 1292.17 859.20 1297.18 856.75C1300.76 855.00 1301.74 856.58 1305.76 855.00C1310.33 853.21 1309.75 850.00 1314.35 850.00C1318.33 850.00 1318.77 850.00 1322.94 850.00C1327.36 850.00 1327.35 851.23 1331.53 853.00C1335.94 854.86 1335.60 857.25 1340.12 857.25C1344.19 857.25 1345.24 857.25 1348.71 856.25C1353.83 854.77 1352.20 849.31 1357.29 846.75C1360.78 845.00 1363.22 845.00 1365.88 845.00C1371.81 845.00 1369.78 862.50 1374.47 862.50C1378.37 862.50 1378.02 848.75 1383.06 848.75C1386.61 848.75 1387.29 856.25 1391.65 856.25C1395.88 856.25 1395.52 852.00 1400.24 849.25C1404.11 847.00 1404.49 846.25 1408.82 846.25C1413.08 846.25 1413.49 846.75 1417.41 848.75C1422.07 851.12 1422.01 855.00 1426.00 855.00C1430.60 855.00 1429.72 846.25 1434.59 846.25C1438.31 846.25 1438.72 850.00 1443.18 850.00C1447.31 850.00 1448.14 848.75 1451.76 848.75C1456.73 848.75 1455.42 854.30 1460.35 857.00C1464.01 859.00 1465.23 859.00 1468.94 859.00C1473.81 859.00 1473.05 854.90 1477.53 851.25C1481.64 847.90 1482.22 848.57 1486.12 845.00C1490.81 840.70 1490.86 835.50 1494.71 835.50C1499.45 835.50 1498.16 842.92 1503.29 848.75C1506.75 852.67 1507.18 855.00 1511.88 855.00C1515.77 855.00 1516.15 853.25 1520.47 853.25C1524.74 853.25 1525.06 853.25 1529.06 854.25C1533.65 855.40 1533.86 859.25 1537.65 859.25C1542.45 859.25 1542.10 850.00 1546.24 850.00C1550.68 850.00 1550.59 860.50 1554.82 860.50C1559.18 860.50 1558.11 849.50 1563.41 849.50C1566.70 849.50 1572.00 850.50 1572.00 850.50" fill="none" stroke="#22c55e" stroke-width="3.15" stroke-linejoin="round" stroke-linecap="butt"/>
<path d="M988.00 1035.00C988.00 1035.00 992.28 1035.62 996.59 1036.00C1000.87 1036.37 1000.97 1036.50 1005.18 1036.50C1009.55 1036.50 1009.40 1034.89 1013.76 1034.00C1017.99 1033.14 1018.08 1033.00 1022.35 1033.00C1026.66 1033.00 1026.62 1034.50 1030.94 1034.50C1035.20 1034.50 1035.29 1034.50 1039.53 1034.25C1043.88 1033.99 1044.00 1032.25 1048.12 1032.25C1052.59 1032.25 1052.19 1036.50 1056.71 1036.50C1060.78 1036.50 1060.99 1035.75 1065.29 1035.50C1069.57 1035.25 1069.60 1035.50 1073.88 1035.25C1078.18 1035.00 1078.20 1034.50 1082.47 1034.50C1086.79 1034.50 1086.73 1036.00 1091.06 1036.00C1095.32 1036.00 1095.36 1035.94 1099.65 1035.75C1103.94 1035.56 1103.96 1035.25 1108.24 1035.25C1112.55 1035.25 1113.44 1036.50 1116.82 1036.50C1122.03 1036.50 1121.15 1031.40 1125.41 1026.25C1129.74 1021.03 1128.77 1015.75 1134.00 1015.75C1137.36 1015.75 1140.26 1017.25 1142.59 1017.25C1148.84 1017.25 1146.68 995.50 1151.18 995.50C1155.27 995.50 1153.72 1009.04 1159.76 1015.00C1162.30 1017.50 1163.98 1017.50 1168.35 1017.50C1172.56 1017.50 1172.64 1017.19 1176.94 1017.00C1181.23 1016.81 1181.26 1016.75 1185.53 1016.75C1189.85 1016.75 1189.84 1018.00 1194.12 1018.00C1198.43 1018.00 1198.41 1017.12 1202.71 1016.25C1207.00 1015.38 1207.04 1015.55 1211.29 1014.50C1215.63 1013.43 1215.62 1012.00 1219.88 1012.00C1224.21 1012.00 1224.16 1013.56 1228.47 1015.00C1232.75 1016.43 1232.66 1017.75 1237.06 1017.75C1241.25 1017.75 1241.36 1017.56 1245.65 1017.25C1249.95 1016.94 1249.94 1016.50 1254.24 1016.50C1258.53 1016.50 1258.66 1017.25 1262.82 1017.25C1267.25 1017.25 1267.37 1016.12 1271.41 1014.00C1275.96 1011.62 1275.98 1008.25 1280.00 1008.25C1284.57 1008.25 1283.65 1014.56 1288.59 1016.25C1292.24 1017.50 1292.87 1017.50 1297.18 1017.50C1301.46 1017.50 1301.49 1016.50 1305.76 1016.50C1310.08 1016.50 1310.06 1018.00 1314.35 1018.00C1318.65 1018.00 1318.62 1017.00 1322.94 1016.50C1327.21 1016.00 1327.24 1016.25 1331.53 1016.00C1335.82 1015.75 1335.83 1015.50 1340.12 1015.50C1344.42 1015.50 1344.43 1016.25 1348.71 1016.25C1353.01 1016.25 1352.98 1015.00 1357.29 1015.00C1361.57 1015.00 1361.59 1015.31 1365.88 1015.50C1370.17 1015.69 1370.18 1015.75 1374.47 1015.75C1378.77 1015.75 1378.76 1015.38 1383.06 1015.00C1387.35 1014.62 1387.37 1014.25 1391.65 1014.25C1395.96 1014.25 1396.94 1015.50 1400.24 1015.50C1405.53 1015.50 1404.53 1004.50 1408.82 1004.50C1413.12 1004.50 1412.15 1015.50 1417.41 1015.50C1420.74 1015.50 1421.65 1013.76 1426.00 1013.50C1430.24 1013.25 1430.29 1013.38 1434.59 1013.25C1438.88 1013.12 1438.90 1013.00 1443.18 1013.00C1447.49 1013.00 1447.49 1014.25 1451.76 1014.25C1456.08 1014.25 1456.02 1013.13 1460.35 1012.50C1464.61 1011.88 1464.65 1011.75 1468.94 1011.75C1473.24 1011.75 1473.23 1012.50 1477.53 1012.50C1481.82 1012.50 1482.03 1012.50 1486.12 1012.50C1490.62 1012.50 1490.27 1008.50 1494.71 1008.50C1498.86 1008.50 1498.93 1010.49 1503.29 1010.75C1507.52 1011.00 1507.73 1010.75 1511.88 1011.00C1516.32 1011.27 1516.06 1014.25 1520.47 1014.25C1524.64 1014.25 1525.23 1014.25 1529.06 1013.00C1533.81 1011.45 1533.24 1006.50 1537.65 1006.50C1541.82 1006.50 1541.64 1009.93 1546.24 1012.00C1550.23 1013.80 1550.67 1014.25 1554.82 1014.25C1559.26 1014.25 1558.92 1010.25 1563.41 1010.25C1567.51 1010.25 1572.00 1011.25 1572.00 1011.25" fill="none" stroke="#ef4444" stroke-width="3.15" stroke-linejoin="round" stroke-linecap="butt"/>
<line x1="1057.50" x2="1057.50" y1="1051" y2="1058.6" stroke="#6e7079" stroke-width="1.4"/>
<line x1="1143.38" x2="1143.38" y1="1051" y2="1058.6" stroke="#6e7079" stroke-width="1.4"/>
<line x1="1229.26" x2="1229.26" y1="1051" y2="1058.6" stroke="#6e7079" stroke-width="1.4"/>
<line x1="1315.14" x2="1315.14" y1="1051" y2="1058.6" stroke="#6e7079" stroke-width="1.4"/>
<line x1="1401.02" x2="1401.02" y1="1051" y2="1058.6" stroke="#6e7079" stroke-width="1.4"/>
<line x1="1486.90" x2="1486.90" y1="1051" y2="1058.6" stroke="#6e7079" stroke-width="1.4"/>
<line x1="1572.78" x2="1572.78" y1="1051" y2="1058.6" stroke="#6e7079" stroke-width="1.4"/>
<text x="974.00" y="785.90" text-anchor="end" fill="#6e7079" font-size="19.5" textLength="76.0" lengthAdjust="spacingAndGlyphs">100 Kbps</text>
<text x="974.00" y="839.85" text-anchor="end" fill="#6e7079" font-size="19.5" textLength="66.5" lengthAdjust="spacingAndGlyphs">80 Kbps</text>
<text x="974.00" y="893.80" text-anchor="end" fill="#6e7079" font-size="19.5" textLength="66.5" lengthAdjust="spacingAndGlyphs">60 Kbps</text>
<text x="974.00" y="947.75" text-anchor="end" fill="#6e7079" font-size="19.5" textLength="66.5" lengthAdjust="spacingAndGlyphs">40 Kbps</text>
<text x="974.00" y="1001.70" text-anchor="end" fill="#6e7079" font-size="19.5" textLength="66.5" lengthAdjust="spacingAndGlyphs">20 Kbps</text>
<text x="974.00" y="1056.05" text-anchor="end" fill="#6e7079" font-size="19.5" textLength="56.0" lengthAdjust="spacingAndGlyphs">0 Kbps</text>
<text x="1057.50" y="1077.70" text-anchor="middle" fill="#6e7079" font-size="19.5" textLength="44.0" lengthAdjust="spacingAndGlyphs">10:40</text>
<text x="1143.38" y="1077.70" text-anchor="middle" fill="#6e7079" font-size="19.5" textLength="44.0" lengthAdjust="spacingAndGlyphs">10:50</text>
<text x="1229.26" y="1077.70" text-anchor="middle" fill="#6e7079" font-size="19.5" textLength="44.0" lengthAdjust="spacingAndGlyphs">11:00</text>
<text x="1315.14" y="1077.70" text-anchor="middle" fill="#6e7079" font-size="19.5" textLength="44.0" lengthAdjust="spacingAndGlyphs">11:10</text>
<text x="1401.02" y="1077.70" text-anchor="middle" fill="#6e7079" font-size="19.5" textLength="44.0" lengthAdjust="spacingAndGlyphs">11:20</text>
<text x="1486.90" y="1077.70" text-anchor="middle" fill="#6e7079" font-size="19.5" textLength="44.0" lengthAdjust="spacingAndGlyphs">11:30</text>
<text x="1572.78" y="1077.70" text-anchor="middle" fill="#6e7079" font-size="19.5" textLength="44.0" lengthAdjust="spacingAndGlyphs">11:40</text>
<line x1="1141.25" x2="1184.50" y1="1107.50" y2="1107.50" stroke="#22c55e" stroke-width="3.5"/><circle cx="1162.75" cy="1107.50" r="9.7" fill="#fff" stroke="#22c55e" stroke-width="3.4"/>
<text x="1195.90" y="1113.00" text-anchor="start" fill="#333" font-size="22.2" textLength="15.2" lengthAdjust="spacingAndGlyphs">In</text>
<line x1="1232.00" x2="1275.60" y1="1107.50" y2="1107.50" stroke="#ef4444" stroke-width="3.5"/><circle cx="1253.75" cy="1107.50" r="9.7" fill="#fff" stroke="#ef4444" stroke-width="3.4"/>
<text x="1285.00" y="1113.00" text-anchor="start" fill="#333" font-size="22.2" textLength="37.0" lengthAdjust="spacingAndGlyphs">Out</text>
</svg></div><div class="hr" style="left:852.00px;top:1142px;width:758.00px"></div>
<div class="chart-box"><h3 class="t ct" id="t3" style="left:1191.85px;top:1169.51px;font-size:19.60px;transform:scaleX(1.0982)">Disk I/O</h3><svg class="chart" style="left:852px;top:1210px" width="758" height="360" viewBox="852 1210 758 360">

<line x1="988" x2="1572" y1="1231.75" y2="1231.75" stroke="#e0e6f1" stroke-width="1.4"/>
<line x1="988" x2="1572" y1="1276.75" y2="1276.75" stroke="#e0e6f1" stroke-width="1.4"/>
<line x1="988" x2="1572" y1="1321.75" y2="1321.75" stroke="#e0e6f1" stroke-width="1.4"/>
<line x1="988" x2="1572" y1="1366.75" y2="1366.75" stroke="#e0e6f1" stroke-width="1.4"/>
<line x1="988" x2="1572" y1="1411.75" y2="1411.75" stroke="#e0e6f1" stroke-width="1.4"/>
<line x1="988" x2="1572" y1="1456.75" y2="1456.75" stroke="#e0e6f1" stroke-width="1.4"/>
<line x1="988" x2="1572.7" y1="1501.90" y2="1501.90" stroke="#6e7079" stroke-width="1.5"/>
<path d="M988.00 1499.50C988.00 1499.50 992.29 1501.00 996.59 1501.00C1000.88 1501.00 1000.88 1499.50 1005.18 1499.50C1009.47 1499.50 1009.44 1501.00 1013.76 1501.00C1018.03 1501.00 1018.09 1501.00 1022.35 1501.00C1026.68 1501.00 1026.65 1499.50 1030.94 1499.50C1035.24 1499.50 1035.24 1501.00 1039.53 1501.00C1043.82 1501.00 1043.82 1499.50 1048.12 1499.50C1052.41 1499.50 1052.38 1501.00 1056.71 1501.00C1060.97 1501.00 1061.03 1501.00 1065.29 1501.00C1069.62 1501.00 1069.59 1499.50 1073.88 1499.50C1078.18 1499.50 1078.18 1501.00 1082.47 1501.00C1086.76 1501.00 1086.76 1499.50 1091.06 1499.50C1095.35 1499.50 1095.32 1501.00 1099.65 1501.00C1103.91 1501.00 1103.97 1501.00 1108.24 1501.00C1112.56 1501.00 1112.53 1499.50 1116.82 1499.50C1121.12 1499.50 1121.12 1501.00 1125.41 1501.00C1129.71 1501.00 1129.71 1499.50 1134.00 1499.50C1138.29 1499.50 1138.26 1501.00 1142.59 1501.00C1146.85 1501.00 1146.91 1501.00 1151.18 1501.00C1155.50 1501.00 1155.47 1499.50 1159.76 1499.50C1164.06 1499.50 1164.06 1501.00 1168.35 1501.00C1172.65 1501.00 1172.65 1499.50 1176.94 1499.50C1181.24 1499.50 1181.20 1501.00 1185.53 1501.00C1189.79 1501.00 1189.82 1501.00 1194.12 1501.00C1198.41 1501.00 1202.40 1501.00 1202.71 1501.00C1210.99 1501.00 1207.00 1266.00 1211.29 1266.00C1215.59 1266.00 1211.60 1501.00 1219.88 1501.00C1220.18 1501.00 1224.18 1501.00 1228.47 1501.00C1232.76 1501.00 1232.80 1501.00 1237.06 1501.00C1241.39 1501.00 1241.35 1499.50 1245.65 1499.50C1249.94 1499.50 1249.94 1501.00 1254.24 1501.00C1258.53 1501.00 1258.53 1499.50 1262.82 1499.50C1267.12 1499.50 1267.09 1501.00 1271.41 1501.00C1275.67 1501.00 1275.74 1501.00 1280.00 1501.00C1284.33 1501.00 1284.29 1499.50 1288.59 1499.50C1292.88 1499.50 1292.88 1501.00 1297.18 1501.00C1301.47 1501.00 1301.47 1499.50 1305.76 1499.50C1310.06 1499.50 1310.03 1501.00 1314.35 1501.00C1318.61 1501.00 1318.68 1501.00 1322.94 1501.00C1327.27 1501.00 1327.24 1499.50 1331.53 1499.50C1335.82 1499.50 1335.82 1501.00 1340.12 1501.00C1344.41 1501.00 1344.41 1499.50 1348.71 1499.50C1353.00 1499.50 1352.97 1501.00 1357.29 1501.00C1361.56 1501.00 1361.62 1501.00 1365.88 1501.00C1370.21 1501.00 1370.18 1499.50 1374.47 1499.50C1378.76 1499.50 1378.76 1501.00 1383.06 1501.00C1387.35 1501.00 1387.35 1499.50 1391.65 1499.50C1395.94 1499.50 1395.91 1501.00 1400.24 1501.00C1404.50 1501.00 1404.56 1501.00 1408.82 1501.00C1413.15 1501.00 1413.12 1499.50 1417.41 1499.50C1421.71 1499.50 1421.71 1501.00 1426.00 1501.00C1430.29 1501.00 1430.29 1499.50 1434.59 1499.50C1438.88 1499.50 1438.85 1501.00 1443.18 1501.00C1447.44 1501.00 1447.50 1501.00 1451.76 1501.00C1456.09 1501.00 1456.06 1499.50 1460.35 1499.50C1464.65 1499.50 1464.65 1501.00 1468.94 1501.00C1473.24 1501.00 1473.24 1499.50 1477.53 1499.50C1481.82 1499.50 1481.79 1501.00 1486.12 1501.00C1490.38 1501.00 1490.44 1501.00 1494.71 1501.00C1499.03 1501.00 1499.00 1499.50 1503.29 1499.50C1507.59 1499.50 1507.59 1501.00 1511.88 1501.00C1516.18 1501.00 1516.18 1499.50 1520.47 1499.50C1524.76 1499.50 1524.73 1501.00 1529.06 1501.00C1533.32 1501.00 1533.39 1501.00 1537.65 1501.00C1541.97 1501.00 1541.94 1499.50 1546.24 1499.50C1550.53 1499.50 1550.50 1501.00 1554.82 1501.00C1559.09 1501.00 1559.13 1500.80 1563.41 1500.30C1567.72 1499.80 1572.00 1499.00 1572.00 1499.00L1572 1501.60L988 1501.60Z" fill="#3b82f6" fill-opacity="0.090"/>
<path d="M988.00 1481.75C988.00 1481.75 992.02 1486.75 996.59 1486.75C1000.61 1486.75 1000.84 1485.51 1005.18 1485.00C1009.43 1484.50 1010.07 1485.00 1013.76 1484.50C1018.66 1483.84 1017.46 1477.00 1022.35 1477.00C1026.05 1477.00 1026.90 1477.00 1030.94 1477.50C1035.49 1478.06 1035.19 1482.00 1039.53 1482.00C1043.77 1482.00 1044.31 1478.00 1048.12 1478.00C1052.90 1478.00 1051.74 1486.25 1056.71 1486.25C1060.33 1486.25 1062.75 1486.25 1065.29 1485.00C1071.34 1482.03 1068.79 1466.25 1073.88 1466.25C1077.38 1466.25 1077.37 1472.83 1082.47 1477.50C1085.96 1480.70 1086.63 1480.07 1091.06 1482.00C1095.22 1483.82 1095.54 1485.00 1099.65 1485.00C1104.13 1485.00 1104.39 1483.08 1108.24 1480.00C1112.98 1476.20 1111.82 1471.25 1116.82 1471.25C1120.40 1471.25 1123.07 1473.00 1125.41 1473.00C1131.66 1473.00 1129.19 1451.25 1134.00 1451.25C1137.78 1451.25 1140.30 1467.50 1142.59 1467.50C1148.89 1467.50 1145.78 1417.50 1151.18 1417.50C1154.37 1417.50 1154.85 1432.09 1159.76 1446.25C1163.44 1456.84 1162.14 1465.69 1168.35 1467.00C1170.73 1467.50 1172.79 1467.00 1176.94 1467.50C1181.38 1468.03 1181.55 1468.55 1185.53 1470.75C1190.14 1473.30 1189.91 1477.00 1194.12 1477.00C1198.50 1477.00 1201.82 1475.31 1202.71 1470.00C1210.41 1423.69 1206.64 1373.75 1211.29 1373.75C1215.23 1373.75 1212.35 1416.06 1219.88 1455.00C1220.93 1460.43 1223.83 1462.50 1228.47 1462.50C1232.42 1462.50 1232.69 1458.00 1237.06 1458.00C1241.28 1458.00 1242.17 1458.81 1245.65 1461.75C1250.76 1466.06 1248.95 1472.50 1254.24 1472.50C1257.54 1472.50 1258.53 1472.50 1262.82 1472.50C1267.12 1472.50 1267.78 1473.00 1271.41 1473.00C1276.37 1473.00 1275.64 1465.00 1280.00 1465.00C1284.23 1465.00 1283.69 1471.84 1288.59 1472.50C1292.28 1473.00 1292.88 1473.00 1297.18 1473.00C1301.47 1473.00 1301.52 1473.00 1305.76 1472.50C1310.11 1471.99 1310.19 1470.50 1314.35 1470.50C1318.78 1470.50 1319.92 1474.25 1322.94 1474.25C1328.51 1474.25 1325.81 1461.74 1331.53 1459.25C1334.40 1458.00 1335.82 1458.00 1340.12 1458.00C1344.41 1458.00 1345.24 1458.00 1348.71 1459.25C1353.83 1461.09 1352.27 1465.10 1357.29 1468.75C1360.86 1471.35 1361.47 1471.75 1365.88 1471.75C1370.06 1471.75 1370.26 1471.00 1374.47 1471.00C1378.84 1471.00 1378.89 1473.50 1383.06 1473.50C1387.48 1473.50 1387.40 1469.50 1391.65 1469.50C1395.99 1469.50 1396.23 1474.00 1400.24 1474.00C1404.82 1474.00 1403.99 1467.00 1408.82 1467.00C1412.57 1467.00 1413.43 1467.00 1417.41 1467.00C1422.02 1467.00 1421.40 1471.14 1426.00 1472.00C1429.99 1472.75 1430.37 1472.75 1434.59 1472.75C1438.96 1472.75 1438.81 1470.25 1443.18 1470.25C1447.40 1470.25 1447.85 1471.25 1451.76 1471.25C1456.44 1471.25 1456.21 1465.50 1460.35 1465.50C1464.80 1465.50 1464.11 1472.50 1468.94 1472.50C1472.69 1472.50 1473.40 1472.50 1477.53 1472.00C1481.98 1471.46 1481.85 1470.30 1486.12 1468.50C1490.43 1466.68 1490.62 1464.75 1494.71 1464.75C1499.21 1464.75 1498.62 1469.30 1503.29 1470.50C1507.21 1471.50 1507.63 1471.50 1511.88 1471.50C1516.22 1471.50 1516.52 1469.50 1520.47 1469.50C1525.10 1469.50 1525.43 1475.25 1529.06 1475.25C1534.02 1475.25 1532.95 1464.00 1537.65 1464.00C1541.54 1464.00 1541.32 1472.00 1546.24 1472.00C1549.91 1472.00 1550.49 1470.25 1554.82 1470.25C1559.07 1470.25 1559.26 1470.25 1563.41 1470.25C1567.85 1470.25 1572.00 1473.50 1572.00 1473.50L1572 1501.60L988 1501.60Z" fill="#f97316" fill-opacity="0.085"/>
<path d="M988.00 1499.50C988.00 1499.50 992.29 1501.00 996.59 1501.00C1000.88 1501.00 1000.88 1499.50 1005.18 1499.50C1009.47 1499.50 1009.44 1501.00 1013.76 1501.00C1018.03 1501.00 1018.09 1501.00 1022.35 1501.00C1026.68 1501.00 1026.65 1499.50 1030.94 1499.50C1035.24 1499.50 1035.24 1501.00 1039.53 1501.00C1043.82 1501.00 1043.82 1499.50 1048.12 1499.50C1052.41 1499.50 1052.38 1501.00 1056.71 1501.00C1060.97 1501.00 1061.03 1501.00 1065.29 1501.00C1069.62 1501.00 1069.59 1499.50 1073.88 1499.50C1078.18 1499.50 1078.18 1501.00 1082.47 1501.00C1086.76 1501.00 1086.76 1499.50 1091.06 1499.50C1095.35 1499.50 1095.32 1501.00 1099.65 1501.00C1103.91 1501.00 1103.97 1501.00 1108.24 1501.00C1112.56 1501.00 1112.53 1499.50 1116.82 1499.50C1121.12 1499.50 1121.12 1501.00 1125.41 1501.00C1129.71 1501.00 1129.71 1499.50 1134.00 1499.50C1138.29 1499.50 1138.26 1501.00 1142.59 1501.00C1146.85 1501.00 1146.91 1501.00 1151.18 1501.00C1155.50 1501.00 1155.47 1499.50 1159.76 1499.50C1164.06 1499.50 1164.06 1501.00 1168.35 1501.00C1172.65 1501.00 1172.65 1499.50 1176.94 1499.50C1181.24 1499.50 1181.20 1501.00 1185.53 1501.00C1189.79 1501.00 1189.82 1501.00 1194.12 1501.00C1198.41 1501.00 1202.40 1501.00 1202.71 1501.00C1210.99 1501.00 1207.00 1266.00 1211.29 1266.00C1215.59 1266.00 1211.60 1501.00 1219.88 1501.00C1220.18 1501.00 1224.18 1501.00 1228.47 1501.00C1232.76 1501.00 1232.80 1501.00 1237.06 1501.00C1241.39 1501.00 1241.35 1499.50 1245.65 1499.50C1249.94 1499.50 1249.94 1501.00 1254.24 1501.00C1258.53 1501.00 1258.53 1499.50 1262.82 1499.50C1267.12 1499.50 1267.09 1501.00 1271.41 1501.00C1275.67 1501.00 1275.74 1501.00 1280.00 1501.00C1284.33 1501.00 1284.29 1499.50 1288.59 1499.50C1292.88 1499.50 1292.88 1501.00 1297.18 1501.00C1301.47 1501.00 1301.47 1499.50 1305.76 1499.50C1310.06 1499.50 1310.03 1501.00 1314.35 1501.00C1318.61 1501.00 1318.68 1501.00 1322.94 1501.00C1327.27 1501.00 1327.24 1499.50 1331.53 1499.50C1335.82 1499.50 1335.82 1501.00 1340.12 1501.00C1344.41 1501.00 1344.41 1499.50 1348.71 1499.50C1353.00 1499.50 1352.97 1501.00 1357.29 1501.00C1361.56 1501.00 1361.62 1501.00 1365.88 1501.00C1370.21 1501.00 1370.18 1499.50 1374.47 1499.50C1378.76 1499.50 1378.76 1501.00 1383.06 1501.00C1387.35 1501.00 1387.35 1499.50 1391.65 1499.50C1395.94 1499.50 1395.91 1501.00 1400.24 1501.00C1404.50 1501.00 1404.56 1501.00 1408.82 1501.00C1413.15 1501.00 1413.12 1499.50 1417.41 1499.50C1421.71 1499.50 1421.71 1501.00 1426.00 1501.00C1430.29 1501.00 1430.29 1499.50 1434.59 1499.50C1438.88 1499.50 1438.85 1501.00 1443.18 1501.00C1447.44 1501.00 1447.50 1501.00 1451.76 1501.00C1456.09 1501.00 1456.06 1499.50 1460.35 1499.50C1464.65 1499.50 1464.65 1501.00 1468.94 1501.00C1473.24 1501.00 1473.24 1499.50 1477.53 1499.50C1481.82 1499.50 1481.79 1501.00 1486.12 1501.00C1490.38 1501.00 1490.44 1501.00 1494.71 1501.00C1499.03 1501.00 1499.00 1499.50 1503.29 1499.50C1507.59 1499.50 1507.59 1501.00 1511.88 1501.00C1516.18 1501.00 1516.18 1499.50 1520.47 1499.50C1524.76 1499.50 1524.73 1501.00 1529.06 1501.00C1533.32 1501.00 1533.39 1501.00 1537.65 1501.00C1541.97 1501.00 1541.94 1499.50 1546.24 1499.50C1550.53 1499.50 1550.50 1501.00 1554.82 1501.00C1559.09 1501.00 1559.13 1500.80 1563.41 1500.30C1567.72 1499.80 1572.00 1499.00 1572.00 1499.00" fill="none" stroke="#3b82f6" stroke-width="3.15" stroke-linejoin="round" stroke-linecap="butt"/>
<path d="M988.00 1481.75C988.00 1481.75 992.02 1486.75 996.59 1486.75C1000.61 1486.75 1000.84 1485.51 1005.18 1485.00C1009.43 1484.50 1010.07 1485.00 1013.76 1484.50C1018.66 1483.84 1017.46 1477.00 1022.35 1477.00C1026.05 1477.00 1026.90 1477.00 1030.94 1477.50C1035.49 1478.06 1035.19 1482.00 1039.53 1482.00C1043.77 1482.00 1044.31 1478.00 1048.12 1478.00C1052.90 1478.00 1051.74 1486.25 1056.71 1486.25C1060.33 1486.25 1062.75 1486.25 1065.29 1485.00C1071.34 1482.03 1068.79 1466.25 1073.88 1466.25C1077.38 1466.25 1077.37 1472.83 1082.47 1477.50C1085.96 1480.70 1086.63 1480.07 1091.06 1482.00C1095.22 1483.82 1095.54 1485.00 1099.65 1485.00C1104.13 1485.00 1104.39 1483.08 1108.24 1480.00C1112.98 1476.20 1111.82 1471.25 1116.82 1471.25C1120.40 1471.25 1123.07 1473.00 1125.41 1473.00C1131.66 1473.00 1129.19 1451.25 1134.00 1451.25C1137.78 1451.25 1140.30 1467.50 1142.59 1467.50C1148.89 1467.50 1145.78 1417.50 1151.18 1417.50C1154.37 1417.50 1154.85 1432.09 1159.76 1446.25C1163.44 1456.84 1162.14 1465.69 1168.35 1467.00C1170.73 1467.50 1172.79 1467.00 1176.94 1467.50C1181.38 1468.03 1181.55 1468.55 1185.53 1470.75C1190.14 1473.30 1189.91 1477.00 1194.12 1477.00C1198.50 1477.00 1201.82 1475.31 1202.71 1470.00C1210.41 1423.69 1206.64 1373.75 1211.29 1373.75C1215.23 1373.75 1212.35 1416.06 1219.88 1455.00C1220.93 1460.43 1223.83 1462.50 1228.47 1462.50C1232.42 1462.50 1232.69 1458.00 1237.06 1458.00C1241.28 1458.00 1242.17 1458.81 1245.65 1461.75C1250.76 1466.06 1248.95 1472.50 1254.24 1472.50C1257.54 1472.50 1258.53 1472.50 1262.82 1472.50C1267.12 1472.50 1267.78 1473.00 1271.41 1473.00C1276.37 1473.00 1275.64 1465.00 1280.00 1465.00C1284.23 1465.00 1283.69 1471.84 1288.59 1472.50C1292.28 1473.00 1292.88 1473.00 1297.18 1473.00C1301.47 1473.00 1301.52 1473.00 1305.76 1472.50C1310.11 1471.99 1310.19 1470.50 1314.35 1470.50C1318.78 1470.50 1319.92 1474.25 1322.94 1474.25C1328.51 1474.25 1325.81 1461.74 1331.53 1459.25C1334.40 1458.00 1335.82 1458.00 1340.12 1458.00C1344.41 1458.00 1345.24 1458.00 1348.71 1459.25C1353.83 1461.09 1352.27 1465.10 1357.29 1468.75C1360.86 1471.35 1361.47 1471.75 1365.88 1471.75C1370.06 1471.75 1370.26 1471.00 1374.47 1471.00C1378.84 1471.00 1378.89 1473.50 1383.06 1473.50C1387.48 1473.50 1387.40 1469.50 1391.65 1469.50C1395.99 1469.50 1396.23 1474.00 1400.24 1474.00C1404.82 1474.00 1403.99 1467.00 1408.82 1467.00C1412.57 1467.00 1413.43 1467.00 1417.41 1467.00C1422.02 1467.00 1421.40 1471.14 1426.00 1472.00C1429.99 1472.75 1430.37 1472.75 1434.59 1472.75C1438.96 1472.75 1438.81 1470.25 1443.18 1470.25C1447.40 1470.25 1447.85 1471.25 1451.76 1471.25C1456.44 1471.25 1456.21 1465.50 1460.35 1465.50C1464.80 1465.50 1464.11 1472.50 1468.94 1472.50C1472.69 1472.50 1473.40 1472.50 1477.53 1472.00C1481.98 1471.46 1481.85 1470.30 1486.12 1468.50C1490.43 1466.68 1490.62 1464.75 1494.71 1464.75C1499.21 1464.75 1498.62 1469.30 1503.29 1470.50C1507.21 1471.50 1507.63 1471.50 1511.88 1471.50C1516.22 1471.50 1516.52 1469.50 1520.47 1469.50C1525.10 1469.50 1525.43 1475.25 1529.06 1475.25C1534.02 1475.25 1532.95 1464.00 1537.65 1464.00C1541.54 1464.00 1541.32 1472.00 1546.24 1472.00C1549.91 1472.00 1550.49 1470.25 1554.82 1470.25C1559.07 1470.25 1559.26 1470.25 1563.41 1470.25C1567.85 1470.25 1572.00 1473.50 1572.00 1473.50" fill="none" stroke="#f97316" stroke-width="3.15" stroke-linejoin="round" stroke-linecap="butt"/>
<line x1="1057.50" x2="1057.50" y1="1501" y2="1508.6" stroke="#6e7079" stroke-width="1.4"/>
<line x1="1143.38" x2="1143.38" y1="1501" y2="1508.6" stroke="#6e7079" stroke-width="1.4"/>
<line x1="1229.26" x2="1229.26" y1="1501" y2="1508.6" stroke="#6e7079" stroke-width="1.4"/>
<line x1="1315.14" x2="1315.14" y1="1501" y2="1508.6" stroke="#6e7079" stroke-width="1.4"/>
<line x1="1401.02" x2="1401.02" y1="1501" y2="1508.6" stroke="#6e7079" stroke-width="1.4"/>
<line x1="1486.90" x2="1486.90" y1="1501" y2="1508.6" stroke="#6e7079" stroke-width="1.4"/>
<line x1="1572.78" x2="1572.78" y1="1501" y2="1508.6" stroke="#6e7079" stroke-width="1.4"/>
<text x="974.00" y="1235.75" text-anchor="end" fill="#6e7079" font-size="19.5" textLength="61.5" lengthAdjust="spacingAndGlyphs">1 Mbps</text>
<text x="974.00" y="1280.75" text-anchor="end" fill="#6e7079" font-size="19.5" textLength="61.5" lengthAdjust="spacingAndGlyphs">1 Mbps</text>
<text x="974.00" y="1325.75" text-anchor="end" fill="#6e7079" font-size="19.5" textLength="77.0" lengthAdjust="spacingAndGlyphs">800 Kbps</text>
<text x="974.00" y="1370.75" text-anchor="end" fill="#6e7079" font-size="19.5" textLength="77.0" lengthAdjust="spacingAndGlyphs">600 Kbps</text>
<text x="974.00" y="1415.75" text-anchor="end" fill="#6e7079" font-size="19.5" textLength="77.0" lengthAdjust="spacingAndGlyphs">400 Kbps</text>
<text x="974.00" y="1460.75" text-anchor="end" fill="#6e7079" font-size="19.5" textLength="77.0" lengthAdjust="spacingAndGlyphs">200 Kbps</text>
<text x="974.00" y="1505.75" text-anchor="end" fill="#6e7079" font-size="19.5" textLength="56.0" lengthAdjust="spacingAndGlyphs">0 Kbps</text>
<text x="1057.50" y="1527.50" text-anchor="middle" fill="#6e7079" font-size="19.5" textLength="44.0" lengthAdjust="spacingAndGlyphs">10:40</text>
<text x="1143.38" y="1527.50" text-anchor="middle" fill="#6e7079" font-size="19.5" textLength="44.0" lengthAdjust="spacingAndGlyphs">10:50</text>
<text x="1229.26" y="1527.50" text-anchor="middle" fill="#6e7079" font-size="19.5" textLength="44.0" lengthAdjust="spacingAndGlyphs">11:00</text>
<text x="1315.14" y="1527.50" text-anchor="middle" fill="#6e7079" font-size="19.5" textLength="44.0" lengthAdjust="spacingAndGlyphs">11:10</text>
<text x="1401.02" y="1527.50" text-anchor="middle" fill="#6e7079" font-size="19.5" textLength="44.0" lengthAdjust="spacingAndGlyphs">11:20</text>
<text x="1486.90" y="1527.50" text-anchor="middle" fill="#6e7079" font-size="19.5" textLength="44.0" lengthAdjust="spacingAndGlyphs">11:30</text>
<text x="1572.78" y="1527.50" text-anchor="middle" fill="#6e7079" font-size="19.5" textLength="44.0" lengthAdjust="spacingAndGlyphs">11:40</text>
<line x1="1117.50" x2="1161.00" y1="1557.50" y2="1557.50" stroke="#3b82f6" stroke-width="3.5"/><circle cx="1139.25" cy="1557.50" r="9.7" fill="#fff" stroke="#3b82f6" stroke-width="3.4"/>
<text x="1171.60" y="1562.50" text-anchor="start" fill="#333" font-size="22.2" textLength="47.0" lengthAdjust="spacingAndGlyphs">Read</text>
<line x1="1239.25" x2="1282.80" y1="1557.50" y2="1557.50" stroke="#f97316" stroke-width="3.5"/><circle cx="1261.00" cy="1557.50" r="9.7" fill="#fff" stroke="#f97316" stroke-width="3.4"/>
<text x="1292.50" y="1562.50" text-anchor="start" fill="#333" font-size="22.2" textLength="53.0" lengthAdjust="spacingAndGlyphs">Write</text>
</svg></div>
</section></div>
</main>
</div></div>
<div class="frame"></div>
</body></html>
